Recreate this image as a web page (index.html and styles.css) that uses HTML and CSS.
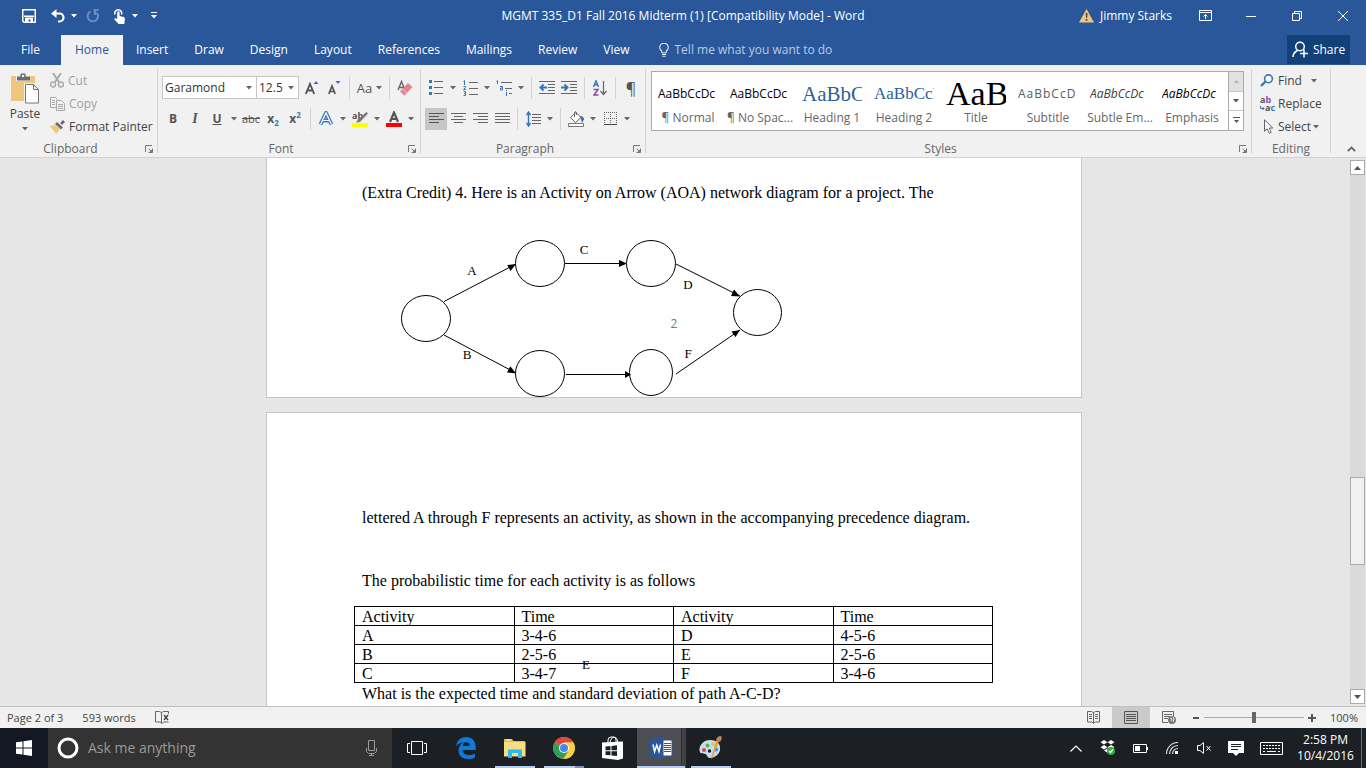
FILE: index.html
```html
<!DOCTYPE html>
<html lang="en">
<head>
<meta charset="utf-8">
<title>MGMT 335_D1 Fall 2016 Midterm (1) [Compatibility Mode] - Word</title>
<link rel="stylesheet" href="styles.css">
</head>
<body>
<svg class="defs" aria-hidden="true">
  <symbol id="caret" viewBox="0 0 6 4"><path d="M0 0h6L3 3.5z" fill="currentColor"/></symbol>
  <symbol id="launcher" viewBox="0 0 8 8"><path d="M.5 7V.5H7M3.500 3.500l3 3M7.500 3.500v4h-4" fill="none" stroke="currentColor"/><path d="M7.500 4v3.500H4z" fill="currentColor"/></symbol>
</svg>
<div class="app">
  <header class="top">
    <div class="titlebar">
      <div class="quick">
        <button class="qa" aria-label="Save"><svg width="14" height="14"><path d="M.75.75h12.5v12.500H2L.750 12z" fill="none" stroke="#fff" stroke-width="1.500"/><path d="M2 6.500h10v1.500H2zM3 8.500h8V13H8.500v-2.500h-2V13H3z" fill="#fff"/></svg></button>
        <button class="qa" aria-label="Undo"><svg width="15" height="14"><path d="M3 4.500h5.500a4 4 0 0 1 0 8H7" fill="none" stroke="#fff" stroke-width="2.200"/><path d="M0 4.500L5.500 0v9z" fill="#fff"/></svg></button>
        <button class="drop" aria-label="Undo list"><svg class="caret"><use href="#caret"/></svg></button>
        <button class="qa dim" aria-label="Repeat"><svg width="14" height="14"><path d="M4.500 2.500A5.200 5.200 0 1 0 11 4" fill="none" stroke="currentColor" stroke-width="2"/><path d="M7.500 0h5.500v1.500h-2.500V6H8z" fill="currentColor"/></svg></button>
        <button class="qa touch" aria-label="Touch mode"><svg width="13" height="16"><path d="M2 6.500a3.500 3.500 0 1 1 6.500 0" fill="none" stroke="#fff" stroke-width="1.500"/><path d="M4.200 4.500a1.200 1.200 0 0 1 2.400 0V8l4 1c1 .3 1.400 1 1.300 2l-.6 5H5.500L1 11l1.500-1 1.700 1z" fill="#fff"/></svg></button>
        <button class="drop" aria-label="Touch options"><svg class="caret"><use href="#caret"/></svg></button>
        <button class="qa" aria-label="Customize Quick Access Toolbar"><svg width="6" height="7"><path d="M0 0h6v1H0zM0 3h6L3 6.500z" fill="#fff"/></svg></button>
      </div>
      <h1 class="title">MGMT 335_D1 Fall 2016 Midterm (1) [Compatibility Mode] - Word</h1>
      <div class="window">
        <button class="user"><svg width="15" height="14"><path d="M7.500 0L15 13.500H0z" fill="#f0c67e"/><path d="M6.700 4h1.800l-.3 5H7zM6.700 10h1.700v1.700H6.700z" fill="#444"/></svg>Jimmy Starks</button>
        <button class="win" aria-label="Ribbon display options"><svg width="13" height="11"><path d="M.5.5h12v10H.5zM.5 2.500h12M6.500 9V4.500M4.500 6.500l2-2 2 2" fill="none" stroke="#fff"/></svg></button>
        <button class="win" aria-label="Minimize"><svg width="10" height="10"><path d="M0 5.500h10" stroke="#fff"/></svg></button>
        <button class="win" aria-label="Restore"><svg width="10" height="10"><path d="M.5 2.500h7v7h-7zM2.500 2.500v-2h7v7h-2" fill="none" stroke="#fff"/></svg></button>
        <button class="win" aria-label="Close"><svg width="10" height="10"><path d="M0 0l10 10M10 0L0 10" stroke="#fff"/></svg></button>
      </div>
    </div>
    <nav class="tabs">
      <button class="tab file">File</button>
      <button class="tab on">Home</button>
      <button class="tab">Insert</button>
      <button class="tab">Draw</button>
      <button class="tab">Design</button>
      <button class="tab">Layout</button>
      <button class="tab">References</button>
      <button class="tab">Mailings</button>
      <button class="tab">Review</button>
      <button class="tab">View</button>
      <button class="tab tell"><svg width="10" height="14"><path d="M3 10V8.500C1.500 7 .7 6 .7 4.500a4.300 4.300 0 0 1 8.600 0C9.300 6 8.500 7 7 8.500V10zM3 11.500h4M3.500 13.300h3" fill="none" stroke="#e2e9f5" stroke-width="1.100"/></svg>Tell me what you want to do</button>
      <button class="share"><svg width="16" height="17"><circle cx="8" cy="5.500" r="4.300" fill="none" stroke="#fff" stroke-width="1.500"/><path d="M1 16c0-3 1.500-5 4.500-6.500M8 12.500h8M12 8.500v8" fill="none" stroke="#fff" stroke-width="1.500"/></svg>Share</button>
    </nav>
  </header>

  <section class="ribbon" aria-label="Home ribbon">
    <div class="group clipboard">
      <div class="body">
        <button class="paste"><svg width="28" height="31"><rect y="3" width="24" height="25" rx="1" fill="#eec67e"/><path d="M5 3h4V1.500Q9 0 10.500 0h3Q15 0 15 1.500V3h4v5H5z" fill="#f0f0f0"/><path d="M6 3.500h3.500V1.500q0-1 1-1h3q1 0 1 1v2H19V7.500H6z" fill="#6d6d6d"/><circle cx="12" cy="3" r="1.200" fill="#f0f0f0"/><path d="M13 10h11l5 5v16H13z" fill="#f0f0f0"/><path d="M14.500 11.500h8l5 5v13.500h-13zM22.500 11.500v5h5" fill="#fff" stroke="#777"/></svg>Paste<svg class="caret"><use href="#caret"/></svg></button>
        <div class="stack">
          <button class="cmd off"><svg width="14" height="15"><path d="M3 0l6 9M11 0L5 9" stroke="#aaa" stroke-width="2"/><circle cx="3" cy="11.500" r="2.500" fill="none" stroke="#aaa" stroke-width="1.400"/><circle cx="11" cy="11.500" r="2.500" fill="none" stroke="#aaa" stroke-width="1.400"/></svg>Cut</button>
          <button class="cmd off"><svg width="15" height="14"><path d="M.5.5h5l2 2v8h-7zM2 3.500h3M2 5.500h3M2 7.500h3" fill="none" stroke="#aaa"/><path d="M6.500 3.500h5l3 3v7h-8z" fill="#f0f0f0" stroke="#aaa"/><path d="M8 7.500h5M8 9.500h5M8 11.500h5" stroke="#aaa"/></svg>Copy</button>
          <button class="cmd"><svg width="15" height="14"><path d="M0 6l5-1 5 4-4 5z" fill="#eec67e"/><path d="M5 4l2-2 6 5.500-2 2zM10 3l3-3 2 2-3 3z" fill="#6d6d6d"/></svg>Format Painter</button>
        </div>
      </div>
      <div class="foot"><span>Clipboard</span><button class="launch" aria-label="Clipboard options"><svg width="8" height="8"><use href="#launcher"/></svg></button></div>
    </div>

    <div class="group font">
      <div class="body rows">
        <div class="row">
          <label class="combo family"><select aria-label="Font"><option>Garamond</option></select><svg class="caret"><use href="#caret"/></svg></label>
          <label class="combo size"><select aria-label="Font size"><option>12.5</option></select><svg class="caret"><use href="#caret"/></svg></label>
          <button class="tool gap" aria-label="Grow font"><svg width="14" height="16"><path d="M.8 14L5 4l4.200 10M2.300 10.500h5.400" fill="none" stroke="#555" stroke-width="1.900"/><path d="M8.500 4L11 1l2.500 3z" fill="#3a76b5"/></svg></button>
          <button class="tool" aria-label="Shrink font"><svg width="14" height="16"><path d="M1.800 14L5 6l3.200 8M3 11.500h4" fill="none" stroke="#555" stroke-width="1.700"/><path d="M8.500 1L11 4l2.500-3z" fill="#3a76b5"/></svg></button>
          <i class="sep"></i>
          <button class="tool wide" aria-label="Change case">Aa<svg class="caret"><use href="#caret"/></svg></button>
          <i class="sep"></i>
          <button class="tool" aria-label="Clear formatting"><svg width="16" height="16"><path d="M1 10L4.500 1.500 8 10M2.500 7.500h4" fill="none" stroke="#666" stroke-width="1.400"/><path d="M3 11.500L11 3l4.500 4L7.500 15.500z" fill="#e8808f"/><path d="M5.500 9l4.500 4" stroke="#f7c3ca"/></svg></button>
        </div>
        <div class="row">
          <button class="tool b">B</button>
          <button class="tool it">I</button>
          <button class="tool u">U</button>
          <button class="drop" aria-label="Underline styles"><svg class="caret"><use href="#caret"/></svg></button>
          <button class="tool strike">abc</button>
          <button class="tool sc">x<sub>2</sub></button>
          <button class="tool sc">x<sup>2</sup></button>
          <i class="sep"></i>
          <button class="tool" aria-label="Text effects"><svg width="16" height="16"><path d="M2.500 13.500L8 2l5.500 11.500M5 9.500h6" fill="none" stroke="#b6d3ee" stroke-width="5"/><path d="M2.500 13.500L8 2l5.500 11.500M5 9.500h6" fill="none" stroke="#3a76b5" stroke-width="3.400"/><path d="M2.500 13.500L8 2l5.500 11.500M5 9.500h6" fill="none" stroke="#fff" stroke-width="1.200"/></svg></button>
          <button class="drop" aria-label="Text effects list"><svg class="caret"><use href="#caret"/></svg></button>
          <button class="tool ink" aria-label="Highlight"><svg width="16" height="16"><text x="0" y="8" class="tiny">ab</text><path d="M14.500 1l1.500 1.500L8 11l-4 .5L6 8.500z" fill="#777"/><path d="M0 12h16v4H0z" fill="#ff0"/></svg></button>
          <button class="drop" aria-label="Highlight colors"><svg class="caret"><use href="#caret"/></svg></button>
          <button class="tool" aria-label="Font color"><svg width="16" height="16"><path d="M4 11L8 1.500 12 11M5.500 8h5" fill="none" stroke="#555" stroke-width="2.200"/><path d="M0 12h16v4H0z" fill="#f00"/></svg></button>
          <button class="drop" aria-label="Font colors"><svg class="caret"><use href="#caret"/></svg></button>
        </div>
      </div>
      <div class="foot"><span>Font</span><button class="launch" aria-label="Font options"><svg width="8" height="8"><use href="#launcher"/></svg></button></div>
    </div>

    <div class="group paragraph">
      <div class="body rows">
        <div class="row">
          <button class="tool" aria-label="Bullets"><svg width="14" height="15"><path d="M5 1.500h9M5 7.500h9M5 13.500h9" stroke="#666"/><path d="M0 0h3v3H0zM0 6h3v3H0zM0 12h3v3H0z" fill="#3a76b5"/></svg></button>
          <button class="drop" aria-label="Bullet list"><svg class="caret"><use href="#caret"/></svg></button>
          <button class="tool" aria-label="Numbering"><svg width="15" height="16"><path d="M6 2.500h9M6 8.500h9M6 14.500h9" stroke="#666"/><path d="M.5 1.500l1-1V5M.500 6.500h2v1L.5 9.500h2.500M.5 11.500h2v4h-2M1 13.500h1.500" fill="none" stroke="#3a76b5"/></svg></button>
          <button class="drop" aria-label="Number list"><svg class="caret"><use href="#caret"/></svg></button>
          <button class="tool" aria-label="Multilevel list"><svg width="17" height="16"><path d="M5 2.500h11M9 8.500h7M13 13.500h3" stroke="#666"/><path d="M.5 1.500l1-1V4M4 6.500h2.500v3.500H4.500V8h2M10.500 10v1M10.500 12v4" fill="none" stroke="#3a76b5"/></svg></button>
          <button class="drop" aria-label="Multilevel styles"><svg class="caret"><use href="#caret"/></svg></button>
          <i class="sep"></i>
          <button class="tool" aria-label="Decrease indent"><svg width="16" height="14"><path d="M0 .5h16M9 3.500h7M9 6.500h7M9 9.500h7M0 12.500h16" stroke="#666"/><path d="M8 6.500H2M4.500 3.500l-3 3 3 3" fill="none" stroke="#3a76b5" stroke-width="2"/></svg></button>
          <button class="tool" aria-label="Increase indent"><svg width="16" height="14"><path d="M0 .5h16M9 3.500h7M9 6.500h7M9 9.500h7M0 12.500h16" stroke="#666"/><path d="M0 6.500h6M3.500 3.500l3 3-3 3" fill="none" stroke="#3a76b5" stroke-width="2"/></svg></button>
          <i class="sep"></i>
          <button class="tool" aria-label="Sort"><svg width="14" height="16"><path d="M.5 7L3 .8 5.500 7M1.500 4.800h3" fill="none" stroke="#3a76b5" stroke-width="1.400"/><path d="M.5 9.500h4.500L1 15h4.500" fill="none" stroke="#8a4fa8" stroke-width="1.500"/><path d="M10.500 1v13M7.500 11l3 3.500 3-3.500" fill="none" stroke="#666" stroke-width="1.200"/></svg></button>
          <i class="sep"></i>
          <button class="tool pil" aria-label="Show paragraph marks">¶</button>
        </div>
        <div class="row">
          <button class="tool lit" aria-label="Align left"><svg width="15" height="11"><path d="M0 .5h15M0 3.500h10M0 6.500h15M0 9.500h10" stroke="#555"/></svg></button>
          <button class="tool" aria-label="Center"><svg width="15" height="11"><path d="M0 .5h15M3 3.500h9M0 6.500h15M3 9.500h9" stroke="#666"/></svg></button>
          <button class="tool" aria-label="Align right"><svg width="15" height="11"><path d="M0 .5h15M5 3.500h10M0 6.500h15M5 9.500h10" stroke="#666"/></svg></button>
          <button class="tool" aria-label="Justify"><svg width="15" height="11"><path d="M0 .5h15M0 3.500h15M0 6.500h15M0 9.500h15" stroke="#666"/></svg></button>
          <i class="sep"></i>
          <button class="tool" aria-label="Line spacing"><svg width="15" height="16"><path d="M6 3.500h9M6 6.500h9M6 9.500h9M6 12.500h9" stroke="#666"/><path d="M2.500 1v14M.500 4l2-3 2 3M.500 12l2 3 2-3" fill="none" stroke="#3a76b5" stroke-width="1.400"/></svg></button>
          <button class="drop" aria-label="Line spacing list"><svg class="caret"><use href="#caret"/></svg></button>
          <i class="sep"></i>
          <button class="tool" aria-label="Shading"><svg width="17" height="16"><path d="M2.500 6.500L8 1.500l5 5-5.500 5z" fill="#fff" stroke="#666"/><path d="M6.500 6V1.500q1.500-2 2 0V4" fill="none" stroke="#666"/><path d="M12 5q4 0 4 3.500L14 12z" fill="#3a76b5"/><path d="M.5 12.500h15v3H.5z" fill="#fff" stroke="#777"/></svg></button>
          <button class="drop" aria-label="Shading colors"><svg class="caret"><use href="#caret"/></svg></button>
          <button class="tool" aria-label="Borders"><svg width="13" height="13"><path d="M0 .5h13M0 6.500h13M.5 0v13M6.500 0v13M12.500 0v13" stroke="#666" stroke-dasharray="1 1"/><path d="M0 12.500h13" stroke="#444"/></svg></button>
          <button class="drop" aria-label="Border styles"><svg class="caret"><use href="#caret"/></svg></button>
        </div>
      </div>
      <div class="foot"><span>Paragraph</span><button class="launch" aria-label="Paragraph options"><svg width="8" height="8"><use href="#launcher"/></svg></button></div>
    </div>

    <div class="group styles">
      <div class="body">
        <div class="gallery">
          <button class="style"><span class="sample body-text">AaBbCcDc</span><span class="name">¶ Normal</span></button>
          <button class="style"><span class="sample body-text">AaBbCcDc</span><span class="name">¶ No Spac...</span></button>
          <button class="style"><span class="sample h-one">AaBbC</span><span class="name">Heading 1</span></button>
          <button class="style"><span class="sample h-two">AaBbCcI</span><span class="name">Heading 2</span></button>
          <button class="style"><span class="sample big">AaB</span><span class="name">Title</span></button>
          <button class="style"><span class="sample sub">AaBbCcD</span><span class="name">Subtitle</span></button>
          <button class="style"><span class="sample subtle">AaBbCcDc</span><span class="name">Subtle Em...</span></button>
          <button class="style"><span class="sample em">AaBbCcDc</span><span class="name">Emphasis</span></button>
          <div class="scroller">
            <button class="dead" aria-label="Previous styles"><svg width="5" height="3"><path d="M0 3L2.500 0 5 3z" fill="#b5b5b5"/></svg></button>
            <button aria-label="Next styles"><svg class="caret"><use href="#caret"/></svg></button>
            <button aria-label="More styles"><svg width="7" height="7"><path d="M0 0h7v1H0zM1 3h5L3.500 6z" fill="#555"/></svg></button>
          </div>
        </div>
      </div>
      <div class="foot"><span>Styles</span><button class="launch" aria-label="Style options"><svg width="8" height="8"><use href="#launcher"/></svg></button></div>
    </div>

    <div class="group editing">
      <div class="body">
        <div class="stack">
          <button class="cmd"><svg width="14" height="13"><circle cx="8.500" cy="4.800" r="3.900" fill="#fff" stroke="#3a76b5" stroke-width="1.600"/><path d="M5.500 7.500L1 12" stroke="#3a76b5" stroke-width="2.400"/></svg>Find<svg class="caret far"><use href="#caret"/></svg></button>
          <button class="cmd"><svg width="16" height="16" class="over"><text x="0" y="7" class="tiny">a<tspan fill="#8a4fa8">b</tspan></text><text x="5" y="15" class="tiny">a<tspan fill="#3a76b5">c</tspan></text><path d="M.500 10v2.500H4M2.500 11l1.500 1.500L2.500 14" fill="none" stroke="#3a76b5"/></svg>Replace</button>
          <button class="cmd"><svg width="14" height="15"><path d="M4.500.8v11.500l2.700-2.500 2 4.500 2-.9-2-4.400h3.600z" fill="#fff" stroke="#666"/></svg>Select<svg class="caret near"><use href="#caret"/></svg></button>
        </div>
      </div>
      <div class="foot"><span>Editing</span></div>
    </div>
    <button class="collapse" aria-label="Collapse ribbon"><svg width="9" height="6"><path d="M.8 5.200L4.500 1.500l3.700 3.700" fill="none" stroke="#666" stroke-width="1.800"/></svg></button>
  </section>

  <main class="work">
    <div class="canvas">
      <article class="page first">
        <p>(Extra Credit) 4. Here is an Activity on Arrow (AOA) network diagram for a project. The</p>
        <svg class="network" width="440" height="168" role="img" aria-label="Activity on Arrow network">
          <g fill="none" stroke="#000">
            <path d="M82 71.500L154 34M203 33.500h61M314 34l64 32M82 105l72 38M204 144.500h62M314 144l64-44"/>
          </g>
          <path d="M154 34l-5.500 7-3.200-6zM265 33.500l-8 3.500v-7zM378 66.500l-9-.5 3-6.500zM154 143.500l-9-1 3.300-6.300zM269 144.500l-6 3.500v-7zM378 100l-4.500 7-4-5.600z"/>
          <g fill="#fff" stroke="#000">
            <ellipse cx="64" cy="88.500" rx="24.500" ry="23"/>
            <ellipse cx="178" cy="33.500" rx="24.500" ry="23"/>
            <ellipse cx="289" cy="33.500" rx="24.500" ry="23"/>
            <ellipse cx="395.500" cy="82.500" rx="24" ry="23"/>
            <ellipse cx="178" cy="143.500" rx="24.500" ry="23"/>
            <ellipse cx="289" cy="142.500" rx="21.500" ry="23" fill="none"/>
          </g>
          <g class="edge-name">
            <text x="110" y="45">A</text>
            <text x="222" y="24">C</text>
            <text x="326" y="59">D</text>
            <text x="105" y="129">B</text>
            <text x="326" y="128">F</text>
          </g>
          <text class="page-no" x="312" y="98">2</text>
        </svg>
      </article>
      <article class="page second">
        <p>lettered A through F represents an activity, as shown in the accompanying precedence diagram.</p>
        <p class="lead">The probabilistic time for each activity is as follows</p>
        <div class="times">
          <table>
            <tr><td>Activity</td><td>Time</td><td>Activity</td><td>Time</td></tr>
            <tr><td>A</td><td>3-4-6</td><td>D</td><td>4-5-6</td></tr>
            <tr><td>B</td><td>2-5-6</td><td>E</td><td>2-5-6</td></tr>
            <tr><td>C</td><td>3-4-7</td><td>F</td><td>3-4-6</td></tr>
          </table>
          <span class="stray">E</span>
        </div>
        <p>What is the expected time and standard deviation of path A-C-D?</p>
      </article>
    </div>
    <div class="vscroll">
      <button aria-label="Scroll up"><svg width="7" height="4"><path d="M0 4L3.500 0 7 4z" fill="#555"/></svg></button>
      <div class="track"><i class="above"></i><i class="thumb"></i><i class="below"></i></div>
      <button aria-label="Scroll down"><svg width="7" height="4"><path d="M0 0h7L3.500 4z" fill="#555"/></svg></button>
    </div>
  </main>

  <footer class="status">
    <span>Page 2 of 3</span>
    <span>593 words</span>
    <button class="proof" aria-label="Proofing errors"><svg width="15" height="13"><path d="M6.500 12L5.500 11h-5V.500h4l2 1v11M6.500 1.500l2-1h5V3M8.500 11.500l-2 1M8.500 11h5" fill="none" stroke="#666"/><path d="M9 4l4 5M13 4L9 9" stroke="#444" stroke-width="1.400"/></svg></button>
    <div class="views">
      <button aria-label="Read mode"><svg width="13" height="13"><path d="M6.500 1.500v11M.5.500h4l2 1 2-1h4v10.500h-4l-2 1-2-1h-4zM2 3.500h3M2 5.500h3M2 7.500h3M8 3.500h3M8 5.500h3M8 7.500h3" fill="none" stroke="#666"/></svg></button>
      <button class="on" aria-label="Print layout"><svg width="14" height="13"><path d="M.5.500h13v12H.5zM2 3.500h10M2 5.500h10M2 7.500h10M2 9.500h10" fill="none" stroke="#555"/></svg></button>
      <button aria-label="Web layout"><svg width="15" height="14"><path d="M6 11.500H.5V.500h11V5M2 3.500h8M2 5.500h6M2 7.500h4" fill="none" stroke="#666"/><circle cx="10" cy="9" r="4" fill="#777"/><path d="M8 7l2 1-1 2M11 6l1 2-1 3" fill="none" stroke="#f0f0f0"/></svg></button>
    </div>
    <button class="zoombtn" aria-label="Zoom out"><svg width="6" height="8"><path d="M0 4h6" stroke="#555" stroke-width="2"/></svg></button>
    <input class="zoom" type="range" min="0" max="100" value="50" aria-label="Zoom">
    <button class="zoombtn" aria-label="Zoom in"><svg width="8" height="8"><path d="M0 4h8M4 0v8" stroke="#555" stroke-width="2"/></svg></button>
    <span class="pct">100%</span>
  </footer>

  <div class="taskbar">
    <button class="start" aria-label="Start"><svg width="16" height="16"><path d="M0 2.300l6.500-.9v6.100H0zM7.500 1.200L16 0v7.500H7.500zM0 8.500h6.500v6.100L0 13.700zM7.500 8.500H16V16l-8.500-1.200z" fill="#fff"/></svg></button>
    <label class="search"><svg width="22" height="22"><circle cx="11" cy="11" r="9" fill="none" stroke="#fff" stroke-width="3"/></svg><input type="text" placeholder="Ask me anything" aria-label="Ask me anything"><svg width="11" height="16"><path d="M2.500.5h6v10h-6zM.5 8v3.500l2 2h6l2-2V8M5.500 13.500v2M3 15.500h5" fill="none" stroke="#9a9a9a"/></svg></label>
    <button class="app-btn" aria-label="Task view"><svg width="20" height="15"><path d="M4.500.5h11v13h-11zM3 2.500H.5v9H3M17 2.500h2.500v9H17" fill="none" stroke="#fff"/></svg></button>
    <button class="app-btn" aria-label="Edge"><svg width="20" height="22" viewBox="0 0 20 22"><path d="M0 9.500C.6 4 4.500 0 10.200 0 16 0 19.700 4 19.700 10v3H6.500c.2 3.300 3 5 6.500 5 2.300 0 4.400-.6 6-1.600v4C17.200 21.500 15 22 12.300 22 6.400 22 2.500 18.500 2.500 13.500c0-3.700 2-6.600 5.200-8.200C4.600 5.500 1.500 7 0 9.500zM6.700 9h7C13.700 6.800 12.500 5.300 10.300 5.300 8.300 5.300 7 6.800 6.700 9z" fill="#0f7ad8"/></svg></button>
    <button class="app-btn run" aria-label="File Explorer"><svg width="22" height="19"><path d="M0 0h8l1.500 2H21v4H0z" fill="#e9b83c"/><path d="M0 3h21.500v14.500H0z" fill="#f9dd82"/><path d="M4 10.500h14V19h-4v-5H8v5H4z" fill="#2fb9ef"/><path d="M2 1h5" stroke="#fff"/></svg></button>
    <button class="app-btn run multi" aria-label="Chrome"><svg width="22" height="22"><circle cx="11" cy="11" r="10.800" fill="#f9cf43"/><path d="M11 11L1.600 5.600A10.800 10.800 0 0 1 20.400 5.600H11z" fill="#dd4b3e"/><path d="M11 11L1.600 5.600A10.800 10.800 0 0 0 10.500 21.800L15.700 13.700z" fill="#2f9e58"/><path d="M11 5.600h9.400A10.800 10.800 0 0 1 10.500 21.800l5.200-8.100z" fill="#f9cf43"/><circle cx="11" cy="11" r="5" fill="#fff"/><circle cx="11" cy="11" r="4" fill="#4a88e8"/></svg></button>
    <button class="app-btn" aria-label="Store"><svg width="22" height="24"><path d="M6 7V4q0-3 3-3h2q3 0 3 3v2M8 6q1-5 4-5t4 5" fill="none" stroke="#fff"/><path d="M0 6.500L21 5.500v17L16 24 0 22z" fill="#fff"/><path d="M3.500 10.500l5-.5v4.300h-5zM9.500 9.900l5.500-.6v5H9.500zM3.500 15.300h5v4l-5-.4zM9.500 15.300H15V20l-5.500-.6z" fill="#1c1f24"/></svg></button>
    <button class="app-btn run word" aria-label="Word"><svg width="23" height="22"><path d="M12 3h10v16H12z" fill="#fff" stroke="#2b579a"/><path d="M14 6.500h7M14 8.500h7M14 10.500h7M14 12.500h7M14 14.500h7" stroke="#2b579a"/><path d="M0 2.500L13.500 0v22L0 19.500z" fill="#2b579a"/><path d="M3 7.500l1.600 7L6.800 8l2.200 6.500L10.500 7.500" fill="none" stroke="#fff" stroke-width="1.500"/></svg></button>
    <button class="app-btn run" aria-label="Paint"><svg width="24" height="24"><path d="M11 4C18 4 22 8 21 14c-.6 4-5 8-10 8-3 0-2.500-3-4.500-4C3 17 1 18.500.5 14.500 0 9 5 4 11 4z" fill="#c6dff0"/><circle cx="5" cy="14" r="2" fill="#d94b3d"/><circle cx="8.500" cy="9.500" r="2" fill="#5fb04f"/><circle cx="14" cy="8" r="2" fill="#f0c53c"/><circle cx="10.500" cy="15" r="1.700" fill="#14202c"/><circle cx="17" cy="13.500" r="2" fill="#3f86c9"/><path d="M20 5l-7 18-1-1 5.500-18z" fill="#e89b3d"/><path d="M17 4q1-4 5-4 2 2-1 6z" fill="#b8875a"/></svg></button>
    <div class="tray">
      <button aria-label="Show hidden icons"><svg width="12" height="7"><path d="M.5 6.500L6 1l5.500 5.500" fill="none" stroke="#fff" stroke-width="1.200"/></svg></button>
      <button aria-label="Dropbox"><svg width="16" height="16"><path d="M4 0l3.500 2.300L4 4.500.5 2.300zM11 0l3.500 2.300L11 4.500 7.500 2.300zM4 5l3.500 2.200L4 9.500.5 7.200zM11 5l3.500 2.200L11 9.500 7.500 7.200zM4 10.500l3.500-2 3.500 2-3.500 2.300z" fill="#fff"/><circle cx="11" cy="11" r="4" fill="#36ab3c"/><path d="M9 11l1.500 1.500L13 9.500" fill="none" stroke="#fff" stroke-width="1.200"/></svg></button>
      <button aria-label="Battery"><svg width="15" height="9"><path d="M.5.5h13v8H.5zM14.500 3v3" fill="none" stroke="#fff"/><path d="M2 2h5v5H2z" fill="#fff"/></svg></button>
      <button aria-label="Network"><svg width="13" height="12"><path d="M.5 12A11.500 11.500 0 0 1 12 .5M3.500 12A8.500 8.500 0 0 1 12 3.500M6.500 12A5.500 5.500 0 0 1 12 6.500" fill="none" stroke="#ddd" stroke-width="1.200"/><path d="M9 12V9h3v3z" fill="#fff"/></svg></button>
      <button aria-label="Volume muted"><svg width="15" height="12"><path d="M.5 3.500H3L6.500.5v11L3 8.500H.5zM9.500 4l4 4.500M13.500 4l-4 4.500" fill="none" stroke="#fff"/></svg></button>
      <button aria-label="Notifications"><svg width="16" height="15"><path d="M0 0h16v12h-5l-3 3-3-3H0z" fill="#fff"/><path d="M3 3.500h10M3 5.500h10M3 8.500h7" stroke="#222"/></svg></button>
      <button class="keys" aria-label="Keyboard"><svg width="23" height="13"><path d="M.5.5h22v12H.5z" fill="none" stroke="#fff"/><path d="M3 3.500h18M3 6.500h18" stroke="#fff" stroke-dasharray="2 1"/><path d="M3 9.500h2M7 9.500h9M18 9.500h2" stroke="#fff"/></svg></button>
      <button class="clock"><span>2:58 PM</span><span>10/4/2016</span></button>
    </div>
  </div>
</div>
</body>
</html>
```
FILE: styles.css
```css
* { box-sizing: border-box; }
body {
  margin: 0;
  font-family: "Open Sans", "Noto Sans", sans-serif;
  font-size: 12px;
  line-height: 16px;
  color: #444;
  background: #e6e6e6;
}
button {
  font: inherit;
  color: inherit;
  background: none;
  border: 0;
  padding: 0;
  margin: 0;
  display: flex;
  align-items: center;
  justify-content: center;
  flex: none;
  white-space: nowrap;
}
svg { display: block; flex: none; }
.defs { position: absolute; width: 0; height: 0; }
.caret { width: 6px; height: 4px; }
.app { display: flex; flex-direction: column; height: 100vh; overflow: hidden; }

/* Title bar and tabs */
.top { background: #2a579a; color: #fff; }
.titlebar { display: grid; grid-template-columns: 1fr auto 1fr; height: 35px; padding-bottom: 4px; align-items: center; }
.quick { display: flex; align-items: center; padding-left: 18px; }
.qa { width: 22px; height: 22px; margin-right: 7px; }
.quick .qa:nth-child(2) { margin-right: 0; }
.quick .drop { margin-right: 3px; }
.qa.touch { margin: 0; }
.dim { color: #6c8cbd; margin-right: 4px; }
.drop { width: 10px; height: 22px; }
.title { margin: 0; font-size: 12px; font-weight: 400; }
.window { display: flex; justify-content: flex-end; }
.user { gap: 6px; margin-right: 10px; }
.win { width: 46px; height: 30px; }
.tabs { display: flex; height: 30px; }
.tab { padding: 0 13px; }
.tab.file { padding: 0 14px 0 21px; margin-right: 7px; }
.tab.on { background: #f1f1f1; color: #2a579a; padding: 0 14px; }
.tab.tell { gap: 6px; color: #b9cbe6; padding-left: 16px; }
.share { margin-left: auto; margin-right: 16px; width: 63px; height: 29px; background: #124078; gap: 5px; }

/* Ribbon */
.ribbon { display: flex; height: 93px; background: #f1f1f1; border-bottom: 1px solid #d2d2d2; padding-top: 4px; flex: none; }
.group { display: flex; flex-direction: column; padding-right: 1px; background: linear-gradient(#d2d2d2, #d2d2d2) right top / 1px 84px no-repeat; }
.body { display: flex; flex: 1; min-height: 0; min-width: 0; }
.foot { display: flex; align-items: center; height: 17px; color: #666; }
.foot span { flex: 1; text-align: center; }
.launch { width: 16px; height: 16px; color: #777; }
.clipboard { width: 158px; }
.font { width: 263px; }
.paragraph { width: 225px; }
.styles { flex: 1; min-width: 0; }
.editing { width: 79px; }
.paste { flex-direction: column; justify-content: flex-start; width: 50px; padding-top: 4px; }
.paste .caret { margin-top: 5px; color: #666; }
.paste > svg:first-child { margin-bottom: 2px; }
.stack { display: flex; flex-direction: column; }
.cmd { height: 23px; gap: 4px; justify-content: flex-start; }
.cmd .caret { color: #666; }
.cmd .far { margin-left: 5px; }
.cmd .near { margin-left: -2px; }
.off { color: #a0a0a0; }
.editing .stack { padding-left: 8px; }
.over { margin-right: -2px; }
.rows { flex-direction: column; gap: 8px; padding: 7px 0 0 4px; }
.row { display: flex; align-items: center; height: 23px; }
.tool { width: 22px; height: 22px; color: #555; }
.row .caret { color: #666; }
.row .drop { width: 12px; }
.sep { width: 1px; height: 22px; background: #d2d2d2; margin: 0 4px; flex: none; }
.combo { display: flex; align-items: center; height: 23px; background: #fff; border: 1px solid #c6c6c6; padding: 0 4px 0 2px; }
.combo select { appearance: none; border: 0; padding: 0; background: none; font: inherit; color: #333; flex: 1; min-width: 0; }
.family { width: 95px; }
.size { width: 43px; margin-left: -1px; }
.gap { margin-left: 2px; }
.row .wide { width: 31px; gap: 4px; font-size: 13px; }
.b { font-weight: 700; }
.it { font-family: "Liberation Serif", serif; font-style: italic; font-weight: 700; font-size: 14px; }
.u { text-decoration: underline; font-weight: 700; }
.strike { text-decoration: line-through; font-size: 11px; }
.sc { font-weight: 700; }
.sc sub, .sc sup { font-size: 8px; line-height: 8px; color: #3a76b5; margin: 3px 0; }
.sc sub { align-self: flex-end; }
.sc sup { align-self: flex-start; }
.pil { font-size: 16px; }
.lit { background: #c6c6c6; }
.tiny { font: 700 9px "Open Sans", sans-serif; fill: #555; }

/* Style gallery */
.styles .body { padding: 2px 7px 0 5px; }
.gallery { display: flex; flex: 1; min-width: 0; height: 60px; background: #fff; border: 1px solid #ababab; }
.style { flex: 1; flex-direction: column; justify-content: flex-end; min-width: 0; padding: 0 6px 2px; color: #666; }
.sample { display: flex; align-items: center; width: 100%; height: 28px; overflow: hidden; color: #000; }
.name { line-height: 20px; }
.body-text { font-size: 12px; }
.h-one, .h-two { font-family: "Liberation Serif", serif; color: #2e5f9a; font-size: 21px; }
.h-two { font-size: 17px; }
.big { font-family: "Liberation Serif", serif; font-size: 34px; }
.sub { color: #5a5a5a; letter-spacing: 1px; }
.subtle { color: #404040; font-style: italic; }
.em { font-style: italic; }
.scroller { display: flex; flex-direction: column; width: 15px; flex: none; border-left: 1px solid #ababab; }
.scroller button { flex: 1; border-top: 1px solid #c6c6c6; color: #555; }
.scroller .dead { background: #e1e1e1; border-top: 0; }
.collapse { width: 35px; align-self: flex-end; height: 16px; padding-left: 6px; }

/* Document */
.work { display: flex; flex: 1; min-height: 0; }
.canvas { flex: 1; display: flex; flex-direction: column; align-items: center; gap: 14px; overflow: hidden; padding-right: 2px; }
.page { width: 816px; max-width: 100%; background: #fff; border: 1px solid #c6c6c6; padding: 0 95px; color: #000; font-family: "Liberation Serif", serif; font-size: 16px; line-height: 22px; white-space: nowrap; }
.page p { margin: 0; }
.first { border-top: 0; padding-top: 24px; flex: none; }
.network { margin: 26px 0 -1px; }
.edge-name { font-size: 13px; text-anchor: middle; }
.page-no { font: 400 12px "Open Sans", sans-serif; fill: #777; text-anchor: middle; }
.second { flex: 1; border-bottom: 0; padding-top: 94px; min-height: 0; overflow: hidden; }
.page .lead { margin: 41px 0 14px; }
.times { position: relative; margin: 0 -7px 0 -8px; }
.times table { width: 100%; table-layout: fixed; border-collapse: collapse; line-height: 16px; }
.times td { border: 1px solid #000; padding: 2px 7px 0; }
.stray { position: absolute; left: 228px; top: 48px; font-size: 13px; }

/* Vertical scroll bar */
.vscroll { display: flex; flex-direction: column; width: 16px; padding: 2px 1px 2px 0; }
.vscroll button { width: 15px; height: 15px; background: #fff; border: 1px solid #ababab; }
.track { display: flex; flex-direction: column; flex: 1; background: #dadada; }
.above { flex: 303; }
.thumb { flex: 87; background: #f0f0f0; border: 1px solid #ababab; }
.below { flex: 124; }

/* Status bar */
.status { display: flex; align-items: center; height: 22px; flex: none; background: #f1f1f1; border-top: 1px solid #c0c0c0; padding: 0 8px 0 7px; font-size: 11px; }
.status span { margin-right: 19px; }
.views { display: flex; margin-left: auto; margin-right: 4px; height: 21px; }
.views button { width: 38px; }
.views .on { background: #cacaca; }
.zoombtn { width: 8px; height: 20px; }
.zoom { appearance: none; width: 100px; height: 16px; margin: 0 4px; background: linear-gradient(#ababab, #ababab) center / 100% 1px no-repeat; }
.zoom::-webkit-slider-thumb { appearance: none; width: 4px; height: 11px; background: #666; }
.status .pct { margin: 0 0 0 14px; }

/* Taskbar */
.taskbar { display: flex; height: 40px; flex: none; background: #1c1f24; color: #fff; }
.start { width: 48px; background: #141822; }
.search { display: flex; align-items: center; width: 344px; background: #333; padding: 0 15px 0 9px; gap: 9px; }
.search input { flex: 1; min-width: 0; border: 0; padding: 0; background: none; color: #fff; font: 14px/20px "Open Sans", sans-serif; }
.search input::placeholder { color: #9a9a9a; opacity: 1; }
.app-btn { width: 49px; position: relative; }
.run::after { content: ""; position: absolute; left: 5px; right: 4px; bottom: 0; height: 2px; background: #b5ccf5; }
.multi::after { background: linear-gradient(90deg, #b5ccf5 78%, #7c91b8 78%); }
.word { background: linear-gradient(90deg, #4c4e52 44px, #2c2e32 44px, #2c2e32 45px, #404246 45px); }
.word::after { left: 0; right: 1px; }
.tray { display: flex; margin-left: auto; padding-right: 4px; }
.tray button { width: 32px; }
.tray .keys { width: 38px; }
.tray .clock { flex-direction: column; width: 72px; border-right: 1px solid #6a6c70; }
```
